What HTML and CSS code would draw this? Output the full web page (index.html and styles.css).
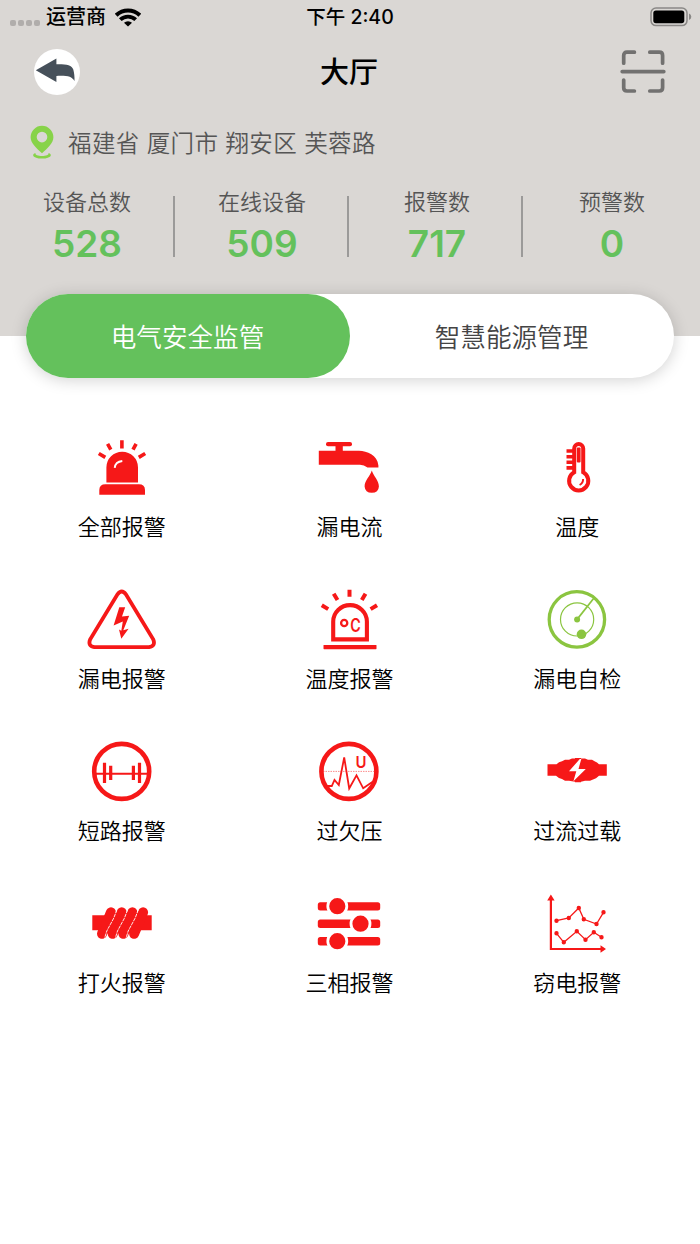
FILE: index.html
```
<!DOCTYPE html>
<html lang="zh-CN">
<head>
  <meta charset="UTF-8" />
  <meta name="viewport" content="width=device-width, initial-scale=1" />
  <title>大厅</title>
  <link rel="stylesheet" href="styles.css">
</head>
<body>
  <header class="hero">
    <div class="status-bar">
      <div class="carrier">
        <span class="signal"><i></i><i></i><i></i><i></i></span>
        <span>运营商</span>
        <svg class="wifi" width="26" height="19" viewBox="0 0 26 19">
          <path d="M1.2 7.2A17 17 0 0 1 24.8 7.2" fill="none" stroke="#000" stroke-width="4"/>
          <path d="M5.3 11.7A11 11 0 0 1 20.7 11.7" fill="none" stroke="#000" stroke-width="3.8"/>
          <path d="M13 18.6L9 14.8A6 6 0 0 1 17 14.8Z"/>
        </svg>
      </div>
      <div class="time">下午 2:40</div>
      <svg class="battery" width="42" height="20" viewBox="0 0 42 20">
        <rect x="1" y="1" width="36" height="17.6" rx="5" fill="none" stroke="#8a8886" stroke-width="1.5"/>
        <rect x="3.3" y="3.4" width="31" height="12.8" rx="2.6"/>
        <path d="M39 6.6Q41.3 7.6 41.3 9.8T39 13Z" fill="#8a8886"/>
      </svg>
    </div>

    <div class="nav-bar">
      <button class="back">
        <svg width="46" height="46" viewBox="0 0 46 46">
          <path d="M1.8 21.3L22.4 9.6V15.2C32 15 38 16 39.3 20.5C40.2 24 40.7 28 40.5 32C37.5 27.5 34 26.5 22.4 26.9V33Z" fill="#46505a"/>
        </svg>
      </button>
      <h1>大厅</h1>
      <svg class="scan" width="46" height="44" viewBox="0 0 46 44" fill="none" stroke="#727170" stroke-width="3.7" stroke-linecap="round" stroke-linejoin="round">
        <path d="M3.7 13.2V5.5Q3.7 2.2 7 2.2H14.4M29.8 2.2H39.3Q42.6 2.2 42.6 5.5V13.2M3.7 30V37.8Q3.7 41 7 41H14.4M29.8 41H39.3Q42.6 41 42.6 37.8V30M2.2 21.6H43.8"/>
      </svg>
    </div>

    <div class="address">
      <svg width="24" height="34" viewBox="0 0 24 34">
        <path d="M12 .8A11.4 11.4 0 0 1 23.4 12.2C23.4 18.5 17 23.5 12 28.3C7 23.5.6 18.5.6 12.2A11.4 11.4 0 0 1 12 .8ZM12 6.8a5.3 5.3 0 1 0 0 10.6a5.3 5.3 0 1 0 0-10.6Z" fill="#87d349" fill-rule="evenodd"/>
        <path d="M5.6 28C1.400 29 2 33.600 12 33.600S22.600 29 18.400 28C20.500 32 3.500 32 5.600 28Z" fill="#87d349"/>
      </svg>
      <span>福建省 厦门市 翔安区 芙蓉路</span>
    </div>

    <div class="stats">
      <div class="stat"><span>设备总数</span><b>528</b></div>
      <div class="stat"><span>在线设备</span><b>509</b></div>
      <div class="stat"><span>报警数</span><b>717</b></div>
      <div class="stat"><span>预警数</span><b>0</b></div>
    </div>
  </header>

  <nav class="tabs">
    <button class="tab active">电气安全监管</button>
    <button class="tab">智慧能源管理</button>
  </nav>

  <main class="menu">
    <a class="item">
      <svg class="icon" viewBox="0 0 72 72">
        <path d="M13.300 62.700V58Q13.300 52.300 19.500 52.300H52.800Q59 52.300 59 58V62.700Z"/>
        <path d="M20.400 50.400V35.500A15.800 15.800 0 0 1 52 35.500V50.400Z"/>
        <path class="line" stroke-width="3.600" d="M35.900 8.200V16.400M21.600 11.900L24.800 17.600M50.100 11.900L47 17.600M12.800 21.500L19.300 25.400M59.200 21.500L52.800 25.400"/>
        <path d="M28.700 35.800Q29.400 29.800 36.300 29" fill="none" stroke="#fff" stroke-width="1.900"/>
      </svg>
      <span>全部报警</span>
    </a>
    <a class="item">
      <svg class="icon" viewBox="0 0 72 72">
        <rect x="13" y="10" width="26" height="4.200" rx="2"/>
        <path d="M22.500 13H29.800V18.700H46C54 19 64.500 23 65.400 33.400V35.500H54.500Q51 33 47 32.800H5.800V18.700H22.500Z"/>
        <path d="M58.800 38.500C60.500 44 65.900 48.500 65.900 54.500Q65.500 60.800 58.800 60.800T51.600 54.500C51.600 48.500 57.200 44 58.800 38.500Z"/>
      </svg>
      <span>漏电流</span>
    </a>
    <a class="item">
      <svg class="icon" viewBox="0 0 72 72">
        <path class="line" stroke-width="4" d="M33.200 40.300V16.500A4.500 4.500 0 0 1 42.200 16.500V40.300A9.600 9.600 0 1 1 33.200 40.300Z"/>
        <path class="line" stroke-width="3.600" d="M25.500 19H33M25.500 24.700H33M25.500 30.300H33M25.500 35.900H33"/>
        <rect x="35.800" y="15.500" width="3.800" height="15" rx="1"/>
        <path class="line" stroke-width="1.900" d="M42.100 47Q42.300 51 38.600 53"/>
      </svg>
      <span>温度</span>
    </a>
    <a class="item">
      <svg class="icon" viewBox="0 0 72 72">
        <path class="line" stroke-width="3.800" d="M31.500 10.300Q35.700 4.700 39.900 10.300L67.200 55.300Q70 61.800 63 63.200H8.400Q1.400 61.800 4.200 55.300Z"/>
        <path d="M33.300 23.300H39.200L36 32.400L43.200 31.800L37.300 46.300L42.600 44.800L35.300 54.700L33 45.500L35.300 46.800L36.800 37.500L27.600 41.500Z"/>
      </svg>
      <span>漏电报警</span>
    </a>
    <a class="item">
      <svg class="icon" viewBox="0 0 72 72">
        <path class="line" stroke-width="4.100" d="M20.200 55.400V37.500A16.850 16.400 0 0 1 53.900 37.500V55.400Z"/>
        <rect x="10.500" y="61" width="53" height="4.200" rx=".6"/>
        <path class="line" stroke-width="4" d="M36.500 5.700V12.700M20.700 9.800L24.500 16M52.500 9.800L48.800 16M8.800 21.200L15.200 25.100M64 21.200L57.600 25.100"/>
        <circle class="line" cx="31.200" cy="39" r="3.100" stroke-width="2.300"/>
        <text class="mark" x="37.200" y="48.200" font-size="18" textLength="10.500" lengthAdjust="spacingAndGlyphs">C</text>
      </svg>
      <span>温度报警</span>
    </a>
    <a class="item">
      <svg class="icon green" viewBox="0 0 72 72">
        <circle class="line" cx="35.900" cy="35.400" r="27.700" stroke-width="3.300"/>
        <circle class="line" cx="36.100" cy="35.400" r="16.600" stroke-width="1.200"/>
        <path class="line" stroke-width="1.700" d="M36.100 35.400L53 14"/>
        <circle cx="36.100" cy="35.400" r="3"/>
        <circle cx="40.500" cy="50.300" r="4.800"/>
      </svg>
      <span>漏电自检</span>
    </a>
    <a class="item">
      <svg class="icon" viewBox="0 0 72 72">
        <circle class="line" cx="35.700" cy="35.400" r="27.500" stroke-width="4.600"/>
        <path class="line" stroke-width="2" d="M10 37.700H62"/>
        <path class="line" stroke-width="3.200" d="M18.500 26.700V47M24.700 29.700V44M47.400 29.700V44M53.500 26.700V47"/>
      </svg>
      <span>短路报警</span>
    </a>
    <a class="item">
      <svg class="icon" viewBox="0 0 72 72">
        <circle class="line" cx="35.900" cy="35.400" r="27.500" stroke-width="4.600"/>
        <path class="line" stroke-width=".5" stroke-dasharray="1.500 1" d="M10 35.400H62"/>
        <path class="line" stroke-width="1.800" d="M14 50H18.800L21.500 44L25.800 49L31.200 21.500L36.200 52.500L43.500 39.300L50.200 52.300L61.500 44.500"/>
        <text class="mark" x="42.600" y="32.300" font-size="16" textLength="11" lengthAdjust="spacingAndGlyphs">U</text>
      </svg>
      <span>过欠压</span>
    </a>
    <a class="item">
      <svg class="icon" viewBox="0 0 72 72">
        <path d="M6.500 28.300H15.500L18 26.200L21 25.200L24 23.800H28L31 22.600H34V22H40V22.600H44L47 23.800H51L54 25.600L56 26.600L58 28.300H65.800V39.700H58L55 42.200L52 43.400L49 44.700H44L40 45.700V46.300H34V45.700L28 44.700H24L21 43L18 42L15 39.700H6.500Z"/>
        <path d="M38.800 23L28 35.300H35.300L32.400 45.300L44.800 33H37.500L40.300 23Z" fill="#fff"/>
      </svg>
      <span>过流过载</span>
    </a>
    <a class="item">
      <svg class="icon" viewBox="0 0 72 72">
        <path d="M6.300 27.300H23L14 42.300H6.300ZM54 27.300H65.700V42.300H50Z"/>
        <path class="line" stroke-width="10" stroke-linejoin="round" stroke-linecap="round" d="M25 24.300L16 45.800M35.700 24.300L26.700 45.800M46.400 24.300L37.400 45.800M57.100 24.300L48.100 45.800"/>
        <path d="M21 30H58L51 41H14Z"/>
        <path d="M30.800 22L27.800 30L20.800 43L18.500 50.500M41.500 22L38.500 30L31.500 43L29.200 50.500M52.200 22L49.200 30L42.200 43L39.900 50.500" fill="none" stroke="#fff" stroke-width=".9" stroke-dasharray="3.500 .8"/>
      </svg>
      <span>打火报警</span>
    </a>
    <a class="item">
      <svg class="icon" viewBox="0 0 72 72">
        <rect x="4.800" y="14.200" width="62.400" height="8.400" rx="2.500"/>
        <rect x="4.800" y="31.500" width="62.400" height="8.400" rx="2.500"/>
        <rect x="4.800" y="49.100" width="62.400" height="8.400" rx="2.500"/>
        <g stroke="#fff" stroke-width="2.800">
          <circle cx="24.300" cy="18.200" r="9.500"/>
          <circle cx="47.500" cy="35.700" r="9.500"/>
          <circle cx="24.300" cy="53.200" r="9.500"/>
        </g>
      </svg>
      <span>三相报警</span>
    </a>
    <a class="item">
      <svg class="icon" viewBox="0 0 72 72">
        <path class="line" stroke-width="2.200" d="M9.900 10V61H62"/>
        <path d="M9.900 6.500L13.600 12.500H6.200ZM65 61L59.500 57.300V64.700Z"/>
        <path class="line" stroke-width="1.300" d="M15.500 32.700L27.800 30L37.800 20L42.800 31.300L55.500 36L62.500 24.300M15.500 45.300L22.800 54.300L35.800 43.300L44.500 51.700L52.800 44.300L60.500 49.300"/>
        <path class="line" stroke-width="4.400" stroke-linecap="round" d="M15.500 32.700h0M27.800 30h0M37.800 20h0M42.800 31.300h0M55.500 36h0M62.500 24.300h0M15.500 45.300h0M22.800 54.300h0M35.800 43.300h0M44.500 51.700h0M52.800 44.300h0M60.500 49.300h0"/>
      </svg>
      <span>窃电报警</span>
    </a>
  </main>
</body>
</html>
```
FILE: styles.css
```
* {
  box-sizing: border-box;
}

body {
  margin: 0;
  min-height: 1244px;
  background: #fff;
  color: #000;
  font-family: Inter, "Noto Sans CJK SC", sans-serif;
  font-weight: 350;
}

svg {
  display: block;
}

button {
  border: none;
  padding: 0;
  font-family: inherit;
  font-weight: inherit;
  cursor: pointer;
}

.hero {
  height: 336px;
  background: #dad7d4;
}

/* status bar */
.status-bar {
  display: grid;
  grid-template-columns: 1fr auto 1fr;
  align-items: center;
  height: 34px;
  padding: 0 8px 0 10px;
  font-size: 20px;
  line-height: 34px;
  font-weight: 500;
}

.carrier {
  display: flex;
  align-items: center;
}

.signal {
  display: flex;
  gap: 2px;
  margin: 12px 6px 0 0;
}

.signal i {
  width: 6px;
  height: 6px;
  border-radius: 2px;
  background: #b0adab;
}

.wifi {
  margin-left: 9px;
}

.time {
  padding: 1px 2px 0 0;
  font-size: 19.500px;
  line-height: 33px;
}

.battery {
  justify-self: end;
}

/* title row */
.nav-bar {
  display: grid;
  grid-template-columns: 1fr auto 1fr;
  align-items: center;
  height: 76px;
  padding: 0 34px;
}

.back {
  width: 46px;
  height: 46px;
  border-radius: 50%;
  background: #fff;
}

.nav-bar h1 {
  margin: 0;
  padding: 2px 2px 0 0;
  font-size: 29px;
  line-height: 46px;
  font-weight: 500;
}

.scan {
  justify-self: end;
}

.address {
  display: flex;
  align-items: center;
  gap: 14px;
  height: 64px;
  padding-left: 30px;
  color: #555;
  font-size: 23.500px;
  letter-spacing: 0.4px;
}

/* counters */
.stats {
  display: grid;
  grid-template-columns: repeat(4, 175px);
  padding-top: 13px;
  text-align: center;
}

.stat {
  display: flex;
  flex-direction: column;
  padding-right: 1px;
  color: #555;
  font-size: 22px;
  background: linear-gradient(#9b9a99, #9b9a99) 173px 9px / 2px 61px no-repeat;
}

.stat:nth-child(2) {
  background-position-x: 172px;
}

.stat:nth-child(3) {
  background-position-x: 171px;
}

.stat:last-child {
  background: none;
}

.stat span {
  line-height: 30px;
}

.stat b {
  color: #64c15c;
  font-size: 37px;
  line-height: 54px;
  font-weight: 600;
}

/* tabs */
.tabs {
  display: flex;
  height: 84px;
  margin: -42px 26px 0;
  border-radius: 42px;
  background: #fff;
  box-shadow: 0 2px 16px rgba(0, 0, 0, 0.18);
}

.tab {
  flex: 1;
  padding: 0 1px 2px 0;
  border-radius: 42px;
  background: none;
  color: #444;
  font-size: 25.600px;
}

.tab.active {
  background: #64c15c;
  color: #fff;
}

/* menu */
.menu {
  display: grid;
  grid-template-columns: repeat(3, 1fr);
  grid-auto-rows: 152px;
  padding: 54px 9px 0 8px;
}

.item {
  display: flex;
  flex-direction: column;
  align-items: center;
  font-size: 22px;
  line-height: 46px;
}

.icon {
  width: 72px;
  height: 72px;
  fill: #f61818;
}

.icon .line {
  fill: none;
  stroke: #f61818;
}

.icon .mark {
  font-weight: 600;
}

.icon.green {
  fill: #8bc540;
}

.icon.green .line {
  stroke: #8bc540;
}
```
